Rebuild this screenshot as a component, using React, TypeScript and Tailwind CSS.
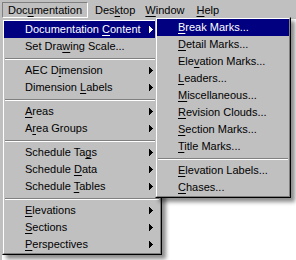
import React from "react";

type Item = { label: string; u: number; arrow?: boolean; active?: boolean } | "sep";

const mainItems: Item[] = [
  { label: "Documentation Content", u: 14, arrow: true, active: true },
  { label: "Set Drawing Scale...", u: 7 },
  "sep",
  { label: "AEC Dimension", u: 5, arrow: true },
  { label: "Dimension Labels", u: 10, arrow: true },
  "sep",
  { label: "Areas", u: 0, arrow: true },
  { label: "Area Groups", u: 1, arrow: true },
  "sep",
  { label: "Schedule Tags", u: 11, arrow: true },
  { label: "Schedule Data", u: 9, arrow: true },
  { label: "Schedule Tables", u: 9, arrow: true },
  "sep",
  { label: "Elevations", u: 0, arrow: true },
  { label: "Sections", u: 0, arrow: true },
  { label: "Perspectives", u: 0, arrow: true },
];

const subItems: Item[] = [
  { label: "Break Marks...", u: 0, active: true },
  { label: "Detail Marks...", u: 0 },
  { label: "Elevation Marks...", u: 3 },
  { label: "Leaders...", u: 0 },
  { label: "Miscellaneous...", u: 0 },
  { label: "Revision Clouds...", u: 0 },
  { label: "Section Marks...", u: 0 },
  { label: "Title Marks...", u: 0 },
  "sep",
  { label: "Elevation Labels...", u: 0 },
  { label: "Chases...", u: 0 },
];

function Label({ text, u }: { text: string; u: number }) {
  return (
    <span className="whitespace-pre">
      {text.slice(0, u)}
      <span className="underline underline-offset-[2px]">{text.charAt(u)}</span>
      {text.slice(u + 1)}
    </span>
  );
}

function Arrow({ white }: { white?: boolean }) {
  const c = white ? "#ffffff" : "#000000";
  return (
    <svg width="4" height="7" viewBox="0 0 4 7" shapeRendering="crispEdges">
      <rect x="0" y="0" width="1" height="7" fill={c} />
      <rect x="1" y="1" width="1" height="5" fill={c} />
      <rect x="2" y="2" width="1" height="3" fill={c} />
      <rect x="3" y="3" width="1" height="1" fill={c} />
    </svg>
  );
}

function Menu({ items, className }: { items: Item[]; className: string }) {
  return (
    <div
      className={
        "absolute border border-t-[#c0c0c0] border-l-[#c0c0c0] border-r-black border-b-black bg-[#c0c0c0] shadow-[4px_4px_4px_rgba(0,0,0,0.45)] " +
        className
      }
    >
      <div className="border border-t-white border-l-white border-r-[#808080] border-b-[#808080]">
        {items.map((it, i) =>
          it === "sep" ? (
            <div key={i} className="h-[7px] flex flex-col justify-center px-[1px]">
              <div className="h-[1px] bg-[#808080]" />
              <div className="h-[1px] bg-white" />
            </div>
          ) : (
            <div
              key={i}
              className={
                "h-[17px] flex items-center justify-between pl-[21px] pr-[7px] " +
                (it.active ? "bg-[#000080] text-white" : "text-black")
              }
            >
              <Label text={it.label} u={it.u} />
              {it.arrow ? <Arrow white={it.active} /> : null}
            </div>
          )
        )}
      </div>
    </div>
  );
}

export default function App() {
  return (
    <div className="relative w-[296px] h-[260px] overflow-hidden bg-white font-['Liberation_Sans',Arial,sans-serif] text-[11px] leading-none">
      <div className="h-[19px] bg-[#c0c0c0] flex items-start pt-[2px] pl-[2px]">
        <div className="h-[16px] flex items-center px-[5px] border border-t-[#808080] border-l-[#808080] border-r-white border-b-white">
          <Label text="Documentation" u={3} />
        </div>
        <div className="h-[16px] flex items-center pl-[6px] pr-[4px] border border-transparent">
          <Label text="Desktop" u={3} />
        </div>
        <div className="h-[16px] flex items-center pl-[4px] pr-[5px] border border-transparent">
          <Label text="Window" u={0} />
        </div>
        <div className="h-[16px] flex items-center pl-[5px] pr-[6px] border border-transparent">
          <Label text="Help" u={0} />
        </div>
      </div>
      <div className="w-[2px] h-[241px] bg-[#c0c0c0]" />
      <Menu items={mainItems} className="left-[2px] top-[19px] w-[160px]" />
      <Menu items={subItems} className="left-[155px] top-[17px] w-[136px]" />
    </div>
  );
}
